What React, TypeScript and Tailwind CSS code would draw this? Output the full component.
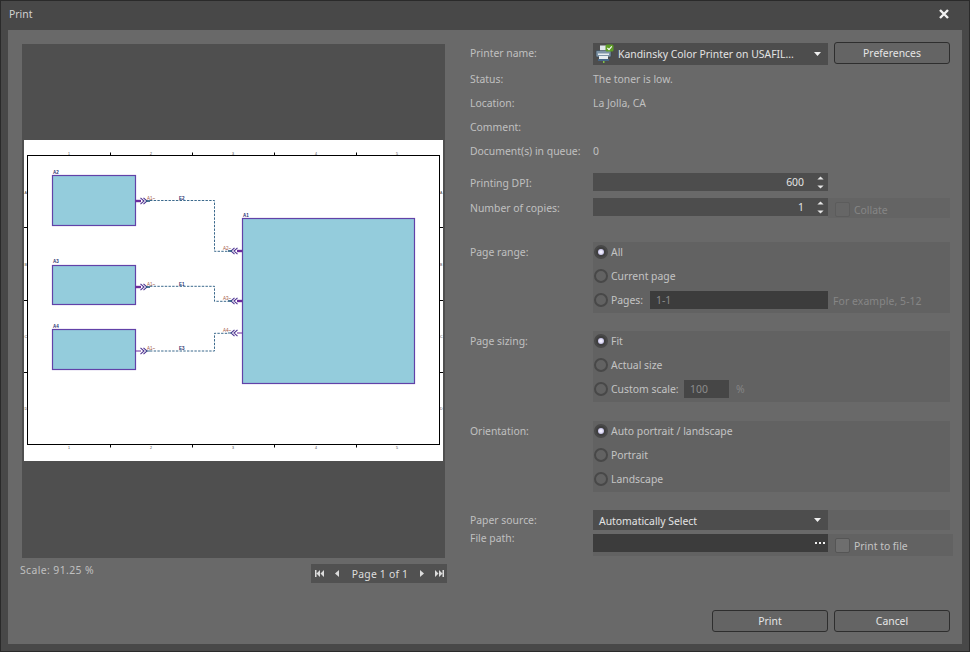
import React from "react";

const Tri = ({ dir, className = "" }: { dir: "up" | "down"; className?: string }) => (
  <svg width="9" height="5" viewBox="0 0 9 5" className={className}>
    <path d={dir === "up" ? "M4.5 0.5 L8.5 4.5 H0.5 Z" : "M0.5 0.5 H8.5 L4.5 4.5 Z"} fill="#e6e6e6" />
  </svg>
);

const Label = ({ children, className = "" }: { children: React.ReactNode; className?: string }) => (
  <div className={`w-[123px] shrink-0 text-[#c0c0c0] ${className}`}>{children}</div>
);

const InfoRow = ({ label, value }: { label: string; value?: string }) => (
  <div className="flex h-[24px] items-center">
    <Label>{label}</Label>
    <div className="text-[#c0c0c0]">{value}</div>
  </div>
);

const Spin = ({ value }: { value: string }) => (
  <div className="flex h-[18px] w-[235px] items-center justify-end bg-[#4d4d4d] text-[#e4e4e4]">
    <span className="mr-[13px]">{value}</span>
    <div className="mr-[4px] flex flex-col gap-[5px]">
      <Tri dir="up" className="h-[4px] w-[7px]" />
      <Tri dir="down" className="h-[4px] w-[7px]" />
    </div>
  </div>
);

const Radio = ({ on }: { on?: boolean }) => (
  <div
    className={`flex h-[14px] w-[14px] shrink-0 items-center justify-center rounded-full border-2 border-[#484848] ${
      on ? "bg-[#3f3f3f]" : "bg-[#626262]"
    }`}
  >
    {on && <div className="h-[6px] w-[6px] rounded-full bg-[radial-gradient(circle,#f2f0ff_20%,#a9a4d6_100%)]" />}
  </div>
);

const RadioRow = ({
  on,
  label,
  labelClass = "",
  children,
}: {
  on?: boolean;
  label: string;
  labelClass?: string;
  children?: React.ReactNode;
}) => (
  <div className="flex h-[24px] items-center">
    <Radio on={on} />
    <span className={`ml-[3px] text-[#c4c4c4] ${labelClass}`}>{label}</span>
    {children}
  </div>
);

const Group = ({ title, className = "", children }: { title: string; className?: string; children: React.ReactNode }) => (
  <div className={`flex ${className}`}>
    <Label className="pt-[3px]">{title}</Label>
    <div className="h-[71px] w-[357px] bg-[#626262] pl-[1px]">
      <div className="mt-[-2px]">{children}</div>
    </div>
  </div>
);

const Btn = ({ children, className = "" }: { children: React.ReactNode; className?: string }) => (
  <button className={`h-[22px] w-[116px] rounded-[3px] border border-[#2e2e2e] bg-[#646464] text-[#e6e6e6] ${className}`}>
    {children}
  </button>
);

const Caret = () => (
  <svg width="7" height="4" viewBox="0 0 7 4" className="mr-[7px]">
    <path d="M0 0 H7 L3.5 4 Z" fill="#f0f0f0" />
  </svg>
);

const Port = ({ y, thick }: { y: number; thick: number }) => (
  <g>
    <line x1="111.3" x2="117" y1={y} y2={y} stroke="#6c2d9c" strokeWidth={thick} />
    <path d={`M116.5 ${y - 3.2} L120 ${y} L116.5 ${y + 3.2} M119.5 ${y - 3.2} L123 ${y} L119.5 ${y + 3.2}`} fill="none" stroke="#4f3592" strokeWidth="1.1" />
    <line x1="122" x2="126" y1={y} y2={y} stroke="#25587f" strokeWidth={thick > 1.5 ? 1.6 : 0.9} />
  </g>
);

const PortIn = ({ y, thick }: { y: number; thick: number }) => (
  <g>
    <line x1="218.3" x2="213" y1={y} y2={y} stroke="#6c2d9c" strokeWidth={thick} />
    <path d={`M213.5 ${y - 3.2} L210 ${y} L213.5 ${y + 3.2} M210.5 ${y - 3.2} L207 ${y} L210.5 ${y + 3.2}`} fill="none" stroke="#4f3592" strokeWidth="1.1" />
    <line x1="208" x2="204" y1={y} y2={y} stroke="#25587f" strokeWidth={thick > 1.5 ? 1.6 : 0.9} />
  </g>
);

const Sheet = () => {
  const tiny = { fontSize: 4.5, fontFamily: "'Liberation Sans', sans-serif" };
  const edge = { fontSize: 3.6, fontFamily: "'Liberation Sans', sans-serif" };
  return (
    <svg width="419" height="321" viewBox="0 0 419 321">
      <rect x="3.5" y="15.5" width="412" height="289" fill="#fff" stroke="#000" strokeWidth="1" />
      {[86.5, 168.5, 250.5, 332.5].map((x) => (
        <g key={x} stroke="#000" strokeWidth="1">
          <line x1={x} x2={x} y1="12.5" y2="15.5" />
          <line x1={x} x2={x} y1="304.5" y2="307.5" />
        </g>
      ))}
      {[87.5, 160.5, 232.5].map((y) => (
        <g key={y} stroke="#000" strokeWidth="1">
          <line x1="0" x2="3.5" y1={y} y2={y} />
          <line x1="415.5" x2="419" y1={y} y2={y} />
        </g>
      ))}
      {[["1", 45], ["2", 127], ["3", 209], ["4", 292], ["5", 373]].map(([t, x]) => (
        <g key={t as string} fill="#444" style={edge}>
          <text x={x as number} y="15" textAnchor="middle">{t}</text>
          <text x={x as number} y="308.5" textAnchor="middle">{t}</text>
        </g>
      ))}
      {[["A", 53.5], ["B", 125.5], ["C", 197.5], ["D", 269.5]].map(([t, y]) => (
        <g key={t as string} fill="#444" style={edge}>
          <text x="1.7" y={y as number} textAnchor="middle">{t}</text>
          <text x="417.3" y={y as number} textAnchor="middle">{t}</text>
        </g>
      ))}
      <g fill="#94ccdc" stroke="#6242a8" strokeWidth="1.2">
        <rect x="28.5" y="35.5" width="83" height="50" />
        <rect x="28.5" y="125.5" width="83" height="39" />
        <rect x="28.5" y="189.5" width="83" height="40" />
        <rect x="218.5" y="78.5" width="172" height="165" />
      </g>
      <g fill="#27306e" fontWeight="700" style={tiny}>
        <text x="29" y="34">A2</text>
        <text x="29" y="123">A3</text>
        <text x="29" y="188">A4</text>
        <text x="219" y="77">A1</text>
        <text x="155" y="60">E2</text>
        <text x="155" y="146">E1</text>
        <text x="155" y="210">E3</text>
      </g>
      <g fill="#a2553f" style={tiny}>
        <text x="123" y="60">A1~</text>
        <text x="123" y="146">A1~</text>
        <text x="123" y="210">A1~</text>
        <text x="199" y="110">A2~</text>
        <text x="199" y="160">A3~</text>
        <text x="199" y="192">A4~</text>
      </g>
      <g fill="none" stroke="#25587f" strokeWidth="0.9" strokeDasharray="2.4 1.3">
        <path d="M126 60.5 H190.5 V111.3 H204" />
        <path d="M126 146.3 H190.5 V161.3 H204" />
        <path d="M126 211 H190.5 V193.3 H204" />
      </g>
      <Port y={61} thick={2.4} />
      <Port y={147} thick={2.4} />
      <Port y={211} thick={1} />
      <PortIn y={111} thick={2.4} />
      <PortIn y={161} thick={2.4} />
      <PortIn y={193} thick={1} />
    </svg>
  );
};

const PrinterIcon = () => (
  <svg width="20" height="20" viewBox="0 0 20 20" className="ml-[2px] shrink-0">
    <rect x="5" y="1.5" width="9" height="6" fill="#dfe6ea" />
    <rect x="1" y="6.5" width="15" height="6.5" rx="1" fill="#7c93a6" stroke="#33414d" strokeWidth="0.6" />
    <rect x="3" y="9.5" width="11" height="1.5" fill="#e6ecef" />
    <rect x="4" y="12" width="9" height="3" fill="#e6ecef" />
    <rect x="3" y="15.5" width="11" height="1" fill="#3f7fc0" />
    <rect x="8" y="17" width="1.5" height="2" fill="#7fc24a" />
    <rect x="10.5" y="0.5" width="8" height="7" rx="1.5" fill="#5d9c26" />
    <path d="M12.4 4 L14 5.6 L16.8 2.4" fill="none" stroke="#fff" strokeWidth="1.1" />
  </svg>
);

const Nav = ({ d }: { d: string }) => (
  <svg width="9" height="7" viewBox="0 0 9 7"><path d={d} fill="#dcdcdc" /></svg>
);

export default function App() {
  return (
    <div
      className="flex h-[652px] w-[970px] flex-col overflow-hidden border border-[#2a2a2a] bg-[#484848] text-[10.4px] leading-[14px]"
      style={{ fontFamily: "'Noto Sans', 'Open Sans', sans-serif" }}
    >
      <div className="flex h-[29px] shrink-0 items-center justify-between pb-[3px] pl-[8px] pr-[20px] text-[#d2d2d2]">
        <span>Print</span>
        <svg width="10" height="10" viewBox="0 0 10 10">
          <path d="M1 1 L9 9 M9 1 L1 9" stroke="#f2f2f2" strokeWidth="2.4" />
        </svg>
      </div>
      <div className="mx-[7px] mb-[7px] flex min-h-0 flex-1 bg-[#696969]">
        <div className="w-[448px] shrink-0 pl-[14px] pt-[14px]">
          <div className="h-[514px] w-[423px] bg-[#4f4f4f] pl-[2px] pt-[96px]">
            <div className="h-[321px] w-[419px] bg-white">
              <Sheet />
            </div>
          </div>
          <div className="flex w-[425px]">
            <span className="ml-[-2px] mt-[5px] tracking-[0.4px] text-[#c0c0c0]">Scale: 91.25 %</span>
            <div className="ml-auto mt-[6px] flex h-[19px] w-[136px] items-center bg-[#515151] pl-[4px] pr-[3px] text-[#dedede]">
              <Nav d="M0 0 H1.5 V7 H0 Z M5 0 V7 L1.5 3.5 Z M9 0 V7 L5.5 3.5 Z" />
              <span className="ml-[9px]"><Nav d="M6 0 V7 L2 3.5 Z" /></span>
              <span className="ml-[7px] flex-1 pr-[6px] text-center tracking-[0.2px]">Page 1 of 1</span>
              <span className="mr-[9px]"><Nav d="M3 0 V7 L7 3.5 Z" /></span>
              <Nav d="M0 0 V7 L3.5 3.5 Z M4 0 V7 L7.5 3.5 Z M7.5 0 H9 V7 H7.5 Z" />
            </div>
          </div>
        </div>
        <div className="ml-[14px] flex-1 pt-[12px]">
          <div className="flex h-[24px] items-start">
            <Label className="pt-[4px]">Printer name:</Label>
            <div className="mt-[1px] flex h-[22px] w-[235px] items-center justify-between bg-[#4d4d4d] text-[#e4e4e4]">
              <PrinterIcon />
              <span className="ml-[3px] flex-1">Kandinsky Color Printer on USAFIL...</span>
              <Caret />
            </div>
            <Btn className="ml-[6px]">Preferences</Btn>
          </div>
          <div className="mt-[-1px] pt-[2px]">
            <InfoRow label="Status:" value="The toner is low." />
            <InfoRow label="Location:" value="La Jolla, CA" />
            <InfoRow label="Comment:" />
            <InfoRow label="Document(s) in queue:" value="0" />
          </div>
          <div className="mt-[10px] flex h-[18px] items-center">
            <Label className="pt-[2px]">Printing DPI:</Label>
            <Spin value="600" />
          </div>
          <div className="mt-[7px] flex h-[18px] items-center">
            <Label className="pt-[2px]">Number of copies:</Label>
            <Spin value="1" />
            <div className="mt-[2px] flex h-[20px] w-[122px] items-center bg-[#646464] pl-[7px] pt-[2px] text-[#868686]">
              <div className="h-[15px] w-[15px] rounded-[2px] border border-[#5c5c5c] bg-[#666666]" />
              <span className="ml-[4px] mt-[2px]">Collate</span>
            </div>
          </div>
          <Group title="Page range:" className="mt-[26px]">
            <RadioRow on label="All" />
            <RadioRow label="Current page" />
            <RadioRow label="Pages:" labelClass="w-[39px]">
              <div className="flex h-[18px] w-[178px] items-center bg-[#3c3c3c] pl-[6px] text-[#8c8c8c]">1-1</div>
              <span className="ml-[5px] mt-[2px] tracking-[0.1px] text-[#868686]">For example, 5-12</span>
            </RadioRow>
          </Group>
          <Group title="Page sizing:" className="mt-[18px]">
            <RadioRow on label="Fit" />
            <RadioRow label="Actual size" />
            <RadioRow label="Custom scale:" labelClass="w-[73px]">
              <div className="flex h-[18px] w-[45px] items-center bg-[#464646] pl-[6px] text-[#8c8c8c]">100</div>
              <span className="ml-[7px] text-[#868686]">%</span>
            </RadioRow>
          </Group>
          <Group title="Orientation:" className="mt-[19px]">
            <RadioRow on label="Auto portrait / landscape" />
            <RadioRow label="Portrait" />
            <RadioRow label="Landscape" />
          </Group>
          <div className="mt-[18px] flex h-[20px] items-center">
            <Label>Paper source:</Label>
            <div className="flex h-[20px] w-[357px] items-center bg-[#626262]">
              <div className="flex h-[20px] w-[235px] items-center justify-between bg-[#4d4d4d] pl-[6px] text-[#e4e4e4]">
                <span className="pt-[2px]">Automatically Select</span>
                <Caret />
              </div>
            </div>
          </div>
          <div className="mt-[4px] flex h-[22px] items-start">
            <Label className="mt-[-3px]">File path:</Label>
            <div className="flex h-[22px] w-[360px] items-start bg-[#626262]">
              <div className="flex h-[18px] w-[235px] items-center justify-end gap-[2px] bg-[#3c3c3c] pr-[3px]">
                <span className="h-[2px] w-[2px] bg-[#f0f0f0]" />
                <span className="h-[2px] w-[2px] bg-[#f0f0f0]" />
                <span className="h-[2px] w-[2px] bg-[#f0f0f0]" />
              </div>
              <div className="ml-[7px] mt-[4px] h-[15px] w-[15px] rounded-[2px] border border-[#555555] bg-[#6e6e6e]" />
              <span className="ml-[4px] mt-[5px] text-[#c4c4c4]">Print to file</span>
            </div>
          </div>
          <div className="mt-[54px] flex justify-end gap-[6px] pr-[12px]">
            <Btn>Print</Btn>
            <Btn>Cancel</Btn>
          </div>
        </div>
      </div>
    </div>
  );
}
